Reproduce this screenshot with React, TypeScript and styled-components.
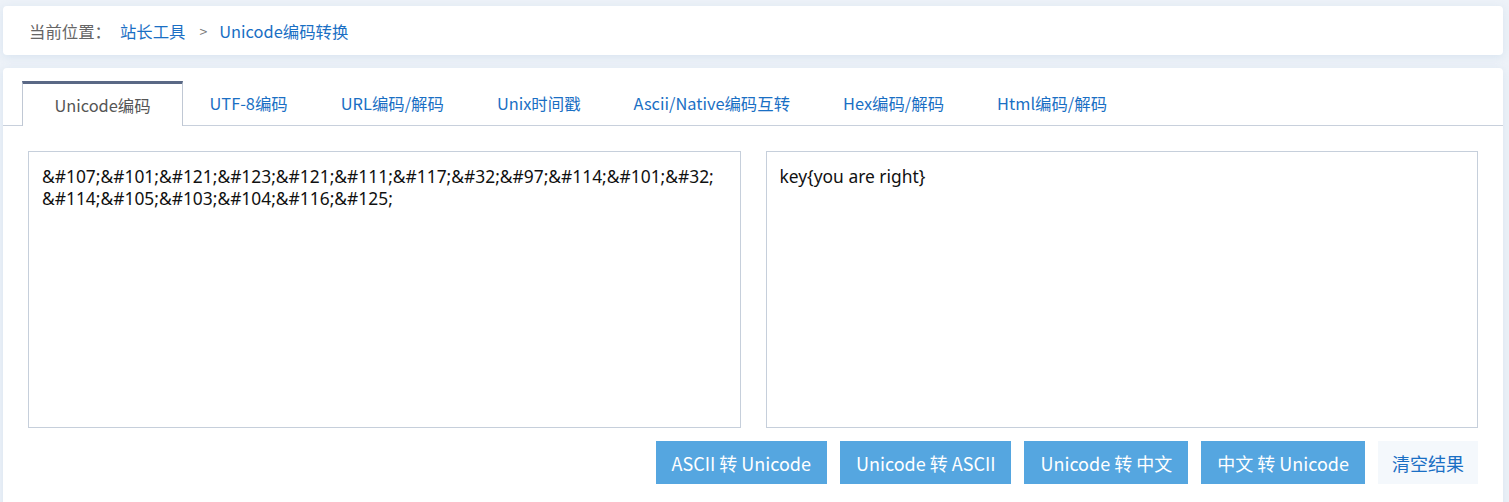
import React, { useState } from "react";
import styled, { createGlobalStyle } from "styled-components";

const GlobalStyle = createGlobalStyle`
  html, body {
    margin: 0;
    padding: 0;
    background: #edf2f8;
    font-family: "Microsoft YaHei", "Noto Sans CJK SC", "Noto Sans", sans-serif;
  }
  * { box-sizing: border-box; }
`;

const Page = styled.div`
  padding: 6px 6px 0 3px;
  display: flex;
  flex-direction: column;
  gap: 13px;
`;

const Card = styled.div`
  background: #fff;
  border-radius: 4px;
  box-shadow: 0 2px 8px rgba(190, 210, 230, 0.45);
`;

const Crumbs = styled(Card)`
  height: 49px;
  display: flex;
  align-items: center;
  padding: 0 0 0 26px;
  font-size: 16.4px;
`;

const CrumbLabel = styled.span`
  color: #666;
  margin-right: 9px;
`;

const CrumbLink = styled.a`
  color: #1a6fc4;
  text-decoration: none;
`;

const CrumbSep = styled.span`
  color: #777;
  margin: 0 12px 0 14px;
  font-size: 14px;
`;

const Main = styled(Card)`
  padding-top: 13px;
  height: 440px;
  border-bottom-left-radius: 0;
  border-bottom-right-radius: 0;
`;

const TabBar = styled.div`
  display: flex;
  height: 45px;
  padding-left: 19px;
  border-bottom: 1px solid #c8d0dc;
`;

const Tab = styled.div<{ $active?: boolean }>`
  display: flex;
  align-items: center;
  justify-content: center;
  height: ${(p) => (p.$active ? "45px" : "44px")};
  padding: ${(p) => (p.$active ? "0" : "0 26.5px")};
  width: ${(p) => (p.$active ? "161px" : "auto")};
  font-size: 16.4px;
  color: ${(p) => (p.$active ? "#555" : "#1a6fc4")};
  background: #fff;
  border-top: ${(p) => (p.$active ? "3px solid #5a6885" : "none")};
  border-left: ${(p) => (p.$active ? "1px solid #c0c8d4" : "none")};
  border-right: ${(p) => (p.$active ? "1px solid #c0c8d4" : "none")};
  margin-bottom: ${(p) => (p.$active ? "-1px" : "0")};
  cursor: pointer;
`;

const Body = styled.div`
  padding: 25px 25px 0 25px;
`;

const Editors = styled.div`
  display: grid;
  grid-template-columns: 1fr 1fr;
  gap: 25px;
`;

const Area = styled.textarea`
  height: 277px;
  border: 1px solid #c6cfdb;
  padding: 13px 20px 13px 13px;
  font-family: "Segoe UI", "Noto Sans", "Noto Sans CJK SC", sans-serif;
  font-size: 17.4px;
  line-height: 22px;
  color: #111;
  resize: none;
  outline: none;
  background: #fff;
`;

const Actions = styled.div`
  display: flex;
  justify-content: flex-end;
  gap: 13px;
  margin-top: 13px;
`;

const Btn = styled.button<{ $plain?: boolean }>`
  height: 43px;
  padding: 0 ${(p) => (p.$plain ? "14px" : "16px")};
  border: none;
  background: ${(p) => (p.$plain ? "#f4f8fc" : "#55a6e0")};
  color: ${(p) => (p.$plain ? "#1a6fc4" : "#fff")};
  font-family: "Microsoft YaHei", "Noto Sans CJK SC", sans-serif;
  font-size: 18px;
  cursor: pointer;
  white-space: pre;
`;

const tabs = [
  "Unicode编码",
  "UTF-8编码",
  "URL编码/解码",
  "Unix时间戳",
  "Ascii/Native编码互转",
  "Hex编码/解码",
  "Html编码/解码",
];

const buttons = ["ASCII 转 Unicode", "Unicode 转 ASCII", "Unicode 转 中文", "中文 转 Unicode"];

export default function App() {
  const [src, setSrc] = useState(
    "&#107;&#101;&#121;&#123;&#121;&#111;&#117;&#32;&#97;&#114;&#101;&#32;&#114;&#105;&#103;&#104;&#116;&#125;"
  );
  const [out, setOut] = useState("key{you are right}");

  return (
    <>
      <GlobalStyle />
      <Page>
        <Crumbs>
          <CrumbLabel>当前位置：</CrumbLabel>
          <CrumbLink href="#">站长工具</CrumbLink>
          <CrumbSep>&gt;</CrumbSep>
          <CrumbLink href="#">Unicode编码转换</CrumbLink>
        </Crumbs>
        <Main>
          <TabBar>
            {tabs.map((t, i) => (
              <Tab key={t} $active={i === 0}>
                {t}
              </Tab>
            ))}
          </TabBar>
          <Body>
            <Editors>
              <Area value={src} onChange={(e) => setSrc(e.target.value)} />
              <Area value={out} onChange={(e) => setOut(e.target.value)} />
            </Editors>
            <Actions>
              {buttons.map((b) => (
                <Btn key={b}>{b}</Btn>
              ))}
              <Btn $plain onClick={() => setOut("")}>
                清空结果
              </Btn>
            </Actions>
          </Body>
        </Main>
      </Page>
    </>
  );
}
